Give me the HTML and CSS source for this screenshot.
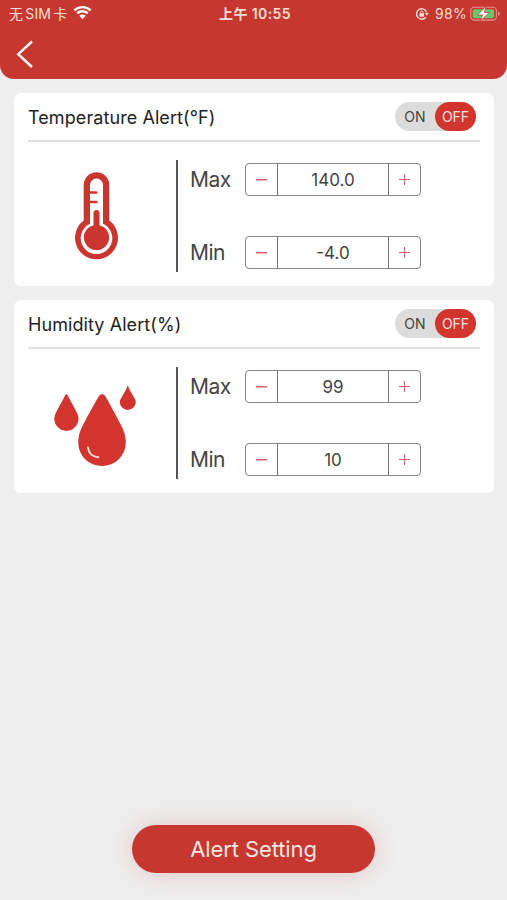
FILE: index.html
```html
<!DOCTYPE html>
<html lang="en">
<head>
  <meta charset="UTF-8" />
  <meta name="viewport" content="width=device-width,initial-scale=1.0" />
  <title>Alert Setting</title>
  <link rel="stylesheet" href="styles.css">
</head>
<body>
  <header class="header">
    <div class="status-bar">
      <div class="status-left">
        <span class="carrier">无<span class="sim">SIM</span>卡</span>
        <svg class="wifi" width="19" height="15" viewBox="0 0 19 15">
          <path d="M1.3 5.4a11.8 11.8 0 0 1 16.4 0M4.2 8.4a7.6 7.6 0 0 1 10.6 0" fill="none" stroke="currentColor" stroke-width="2.4" />
          <path d="M9.5 14.2l-3.2-3.4a4.6 4.6 0 0 1 6.4 0z" fill="currentColor" />
        </svg>
      </div>
      <div class="clock">上午 10:55</div>
      <div class="status-right">
        <svg class="lock" width="14" height="14" viewBox="0 0 14 14" fill="none" stroke="currentColor">
          <path d="M10.800 10.200A5.200 5.200 0 1 1 11.600 5.200" stroke-width="1.400" />
          <path d="M9.800 6h4l-2 2.700z" fill="currentColor" stroke="none" />
          <path d="M5.400 6.500V5.400a1.300 1.300 0 0 1 2.600 0v1.100" stroke-width="1" />
          <rect x="4.400" y="6.200" width="4.600" height="3.500" rx="0.600" fill="currentColor" stroke="none" />
        </svg>
        <span class="percent">98%</span>
        <svg class="battery" width="31" height="16" viewBox="0 0 31 16">
          <rect x="0.800" y="1.300" width="25.600" height="12.800" rx="3.600" fill="none" stroke="#e5938c" stroke-width="1.100" />
          <path d="M28 5.500v4.600q2-.8 2-2.300t-2-2.300z" fill="#e5938c" />
          <rect x="2.700" y="3.200" width="21.400" height="9" rx="1.900" fill="#67c86b" />
          <path d="M15.800.8L7.500 9h4.900l-1.800 5.700L19.400 6.500h-5z" fill="#fff" stroke="#c5372f" stroke-width="0.700" />
        </svg>
      </div>
    </div>
    <a class="back" href="#" aria-label="Back">
      <svg width="18" height="28" viewBox="0 0 18 28">
        <path d="M16 1.500L2.200 14.200 16 27" fill="none" stroke="currentColor" stroke-width="2.400" />
      </svg>
    </a>
  </header>

  <main class="cards">
    <section class="card">
      <div class="card-head">
        <h2>Temperature Alert(°F)</h2>
        <div class="toggle"><span>ON</span><span class="active">OFF</span></div>
      </div>
      <div class="card-body">
        <svg class="picture" viewBox="28 160 148 112">
          <path d="M83.700 220.500V185a12.800 12.800 0 0 1 25.600 0v35.500a21.500 21.500 0 1 1-25.600 0z" fill="#cb352f" />
          <path d="M90 223.800V185a6.500 6.500 0 0 1 13 0v38.800a15.800 15.800 0 1 1-13 0z" fill="#fff" />
          <path d="M89 192.500h7.300M89 202h7.300" stroke="#cb352f" stroke-width="2.600" stroke-linecap="round" />
          <path d="M96.500 213v20" stroke="#cb352f" stroke-width="6" stroke-linecap="round" />
          <circle cx="96.500" cy="237.500" r="12.600" fill="#cb352f" />
        </svg>
        <div class="limits">
          <div class="limit">
            <label>Max</label>
            <div class="stepper"><button class="minus"></button><output>140.0</output><button class="plus"></button></div>
          </div>
          <div class="limit">
            <label>Min</label>
            <div class="stepper"><button class="minus"></button><output>-4.0</output><button class="plus"></button></div>
          </div>
        </div>
      </div>
    </section>

    <section class="card">
      <div class="card-head">
        <h2>Humidity Alert(%)</h2>
        <div class="toggle"><span>ON</span><span class="active">OFF</span></div>
      </div>
      <div class="card-body">
        <svg class="picture" viewBox="28 367 148 112">
          <g fill="#d2352e">
            <path d="M99.300 395.600q2.800-3.200 5.600 0C109 402 115 414 121 425c3 6 4.800 11 4.800 17.300a23.800 23.800 0 0 1-47.600 0c0-6.300 1.800-11.300 4.800-17.300 6-11 12.200-23 16.300-29.400z" />
            <path d="M65.400 394.800q1-1.200 2 0C69.500 399 72.500 404.500 75.800 410.500q2.700 4.500 2.700 8.300a12.100 12.100 0 0 1-24.200 0q0-3.800 2.700-8.300C60.300 404.500 63.300 399 65.400 394.800z" />
            <path d="M127.800 385.300c1.500 4 3.800 8.200 6 11.700q2 3.200 2 4.900a8 8 0 0 1-16 0q0-1.700 2-4.900c2.200-3.500 4.500-7.700 6-11.700z" />
          </g>
          <path d="M88 447.500c.6 5.400 4.200 9.200 10.300 9.800" fill="none" stroke="#fbe3dc" stroke-width="1.900" stroke-linecap="round" />
        </svg>
        <div class="limits">
          <div class="limit">
            <label>Max</label>
            <div class="stepper"><button class="minus"></button><output>99</output><button class="plus"></button></div>
          </div>
          <div class="limit">
            <label>Min</label>
            <div class="stepper"><button class="minus"></button><output>10</output><button class="plus"></button></div>
          </div>
        </div>
      </div>
    </section>
  </main>

  <button class="submit">Alert Setting</button>
</body>
</html>
```
FILE: styles.css
```css
* {
  box-sizing: border-box;
}
body {
  background: #eeeeee;
  color: #444;
  font-family: Inter, "Noto Sans CJK SC", sans-serif;
  margin: 0;
  height: 900px;
  display: flex;
  flex-direction: column;
  overflow: hidden;
}
.header {
  height: 79px;
  background: #c5372f;
  color: #fbdcd6;
  border-radius: 0 0 14px 14px;
}
.status-bar {
  display: grid;
  grid-template-columns: 1fr auto 1fr;
  align-items: center;
  height: 27px;
  padding: 0 6px 0 9px;
  font-size: 14px;
  line-height: 27px;
}
.status-left, .status-right {
  display: flex;
  align-items: center;
}
.status-right {
  justify-content: flex-end;
}
.carrier {
  letter-spacing: 0.2px;
}
.sim {
  margin: 0 2px;
}
.wifi {
  margin-left: 6px;
  margin-top: -3px;
  color: #fff;
}
.clock {
  font-weight: 600;
  letter-spacing: 0.4px;
}
.percent {
  margin: 0 3px 0 6px;
  letter-spacing: 0.3px;
}
.back {
  display: block;
  width: 18px;
  height: 28px;
  margin: 13px 0 0 16px;
  color: #fff;
}
.cards {
  display: flex;
  flex-direction: column;
  gap: 14px;
  padding: 14px 13px 0 14px;
}
.card {
  height: 193px;
  padding: 0 14px;
  background: #fff;
  border-radius: 7px;
}
.card-head {
  display: flex;
  align-items: center;
  justify-content: space-between;
  height: 49px;
  padding-right: 4px;
  border-bottom: 2px solid #e0e0e0;
}
h2 {
  margin: 2px 0 0;
  color: #222;
  font-size: 18px;
  font-weight: 400;
  letter-spacing: 0.08px;
}
.toggle {
  display: flex;
  width: 81px;
  height: 29px;
  border-radius: 15px;
  background: #dcdcdc;
  font-size: 14px;
  line-height: 29px;
  text-align: center;
}
.toggle span {
  width: 40px;
}
.toggle .active {
  width: 41px;
  border-radius: 15px;
  background: #d2352e;
  color: #fde3df;
}
.card-body {
  display: flex;
  height: 112px;
  margin-top: 18px;
}
.picture {
  width: 148px;
  height: 112px;
}
.limits {
  display: flex;
  flex-direction: column;
  justify-content: space-between;
  padding: 3px 0 3px 12px;
  border-left: 2px solid #555;
}
.limit {
  display: flex;
  align-items: center;
}
.limit label {
  width: 55px;
  font-size: 21px;
  line-height: 33px;
  letter-spacing: -0.5px;
}
.stepper {
  display: flex;
  width: 176px;
  height: 33px;
  border: 1px solid #858585;
  border-radius: 4px;
}
.stepper button {
  width: 31px;
  padding: 0;
  border: none;
  background: linear-gradient(#cf6470, #cf6470) center / 11px 1.5px no-repeat;
}
.stepper .plus {
  background: linear-gradient(#cf6470, #cf6470) center / 11px 1px no-repeat,
    linear-gradient(#cf6470, #cf6470) center / 1px 11px no-repeat;
}
.stepper output {
  flex: 1;
  border: solid #777;
  border-width: 0 1px;
  font-size: 17px;
  line-height: 33px;
  text-align: center;
}
.submit {
  width: 243px;
  height: 48px;
  margin: auto auto 27px 132px;
  border: none;
  border-radius: 25px;
  background: #c5372f;
  box-shadow: 0 0 24px rgba(197, 55, 47, 0.22);
  color: #fce6e1;
  font-family: inherit;
  font-size: 22px;
  letter-spacing: -0.1px;
}
```
